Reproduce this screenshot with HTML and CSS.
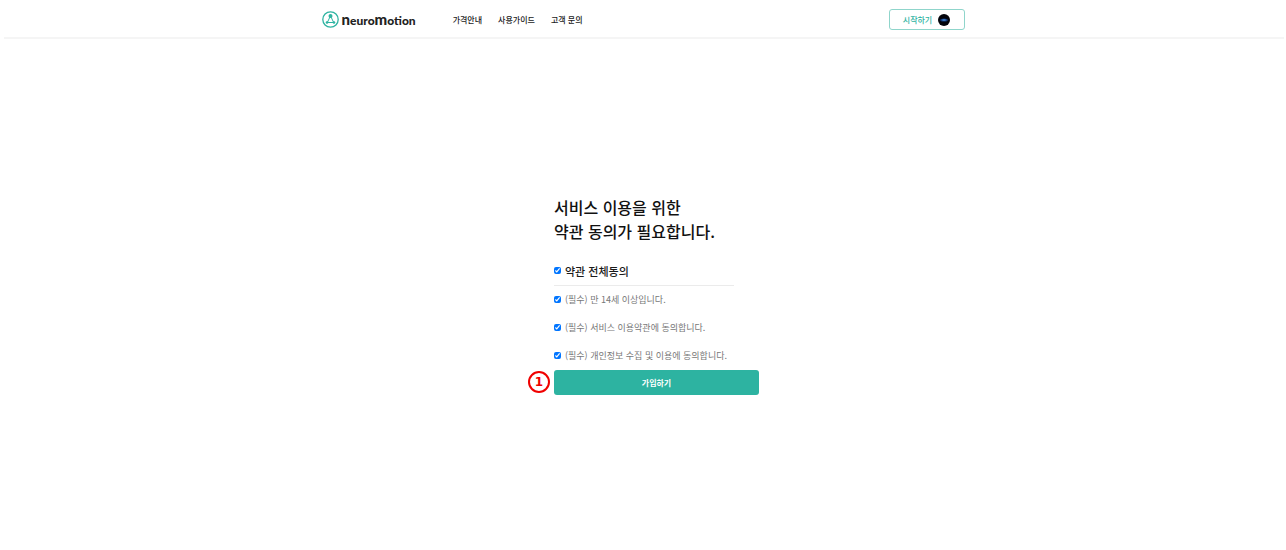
FILE: index.html
```html
<!DOCTYPE html>
<html lang="ko">
<head>
<meta charset="utf-8">
<meta name="viewport" content="width=device-width, initial-scale=1">
<title>NeuroMotion</title>
<link rel="stylesheet" href="styles.css">
</head>
<body>
<header class="header">
  <div class="header-inner">
    <a class="logo" href="#" aria-label="NeuroMotion">
      <svg class="logo-mark" viewBox="0 0 17 17" aria-hidden="true">
        <circle cx="8.5" cy="8.5" r="7.7" fill="none" stroke="#2db3a1" stroke-width="1.3"/>
        <path d="M8.5 4.8 5.2 11.8M8.5 4.8 11.8 11.8M5.2 11.5H11.8" fill="none" stroke="#2db3a1" stroke-width="1"/>
        <circle cx="8.5" cy="5" r="2" fill="#2db3a1"/>
        <circle cx="5" cy="11.5" r="1.3" fill="#2db3a1"/>
        <circle cx="12" cy="11.5" r="1.3" fill="#2db3a1"/>
      </svg>
      <span class="logo-text"><span class="logo-cap">N</span>euro<span class="logo-cap">M</span>otion</span>
    </a>
    <nav class="nav">
      <a href="#">가격안내</a>
      <a href="#">사용가이드</a>
      <a href="#">고객 문의</a>
    </nav>
    <button class="start" type="button">시작하기
      <svg class="avatar" viewBox="0 0 12 12" aria-hidden="true">
        <circle cx="6" cy="6" r="6" fill="#03050c"/>
        <ellipse cx="6" cy="6" rx="3.8" ry="1.6" fill="#123a7c"/>
        <ellipse cx="6" cy="6" rx="2" ry=".8" fill="#4a8fd8"/>
      </svg>
    </button>
  </div>
</header>
<main class="main">
  <form class="terms">
    <h1 class="title">서비스 이용을 위한<br>약관 동의가 필요합니다.</h1>
    <label class="check check-all"><input type="checkbox" checked>약관 전체동의</label>
    <div class="items">
      <label class="check"><input type="checkbox" checked>(필수) 만 14세 이상입니다.</label>
      <label class="check"><input type="checkbox" checked>(필수) 서비스 이용약관에 동의합니다.</label>
      <label class="check"><input type="checkbox" checked>(필수) 개인정보 수집 및 이용에 동의합니다.</label>
    </div>
    <div class="submit-row">
      <span class="step">1</span>
      <button class="submit" type="button">가입하기</button>
    </div>
  </form>
</main>
</body>
</html>
```
FILE: styles.css
```css
* { box-sizing: border-box; }

body {
  margin: 0;
  min-height: 100vh;
  display: flex;
  flex-direction: column;
  background: #fff;
  color: #1a1a1a;
  font-family: "Noto Sans CJK KR", sans-serif;
  font-size: 8px;
}

a { color: inherit; text-decoration: none; }
button { font-family: inherit; cursor: pointer; }

.header {
  margin: 0 2px 0 4px;
  padding-right: 2px;
  border-bottom: 2px solid #f5f5f5;
}

.header-inner {
  display: flex;
  align-items: center;
  max-width: 643px;
  height: 37px;
  margin: 0 auto;
  padding-top: 2px;
}

.logo { display: flex; align-items: center; gap: 3px; }
.logo-mark { width: 17px; height: 17px; }
.logo-text {
  font: 900 12px/16px Lato, sans-serif;
  color: #222;
}
.logo-cap { font-size: 15px; text-transform: lowercase; }

.nav {
  display: flex;
  gap: 16px;
  margin-left: 37px;
  font-weight: 500;
  line-height: 12px;
}

.start {
  display: flex;
  align-items: center;
  justify-content: center;
  gap: 6px;
  width: 76px;
  height: 21px;
  margin-left: auto;
  padding: 0;
  border: 1px solid #8fd5cb;
  border-radius: 3px;
  background: #fff;
  color: #2db3a1;
  font-size: 8px;
  font-weight: 500;
}
.avatar { width: 12px; height: 12px; }

.main {
  flex: 1;
  display: flex;
  align-items: center;
  justify-content: center;
  padding-left: 2px;
}

.terms { width: 180px; }

.title {
  margin: 0 0 20px;
  font-size: 16px;
  font-weight: 500;
  line-height: 24px;
  white-space: nowrap;
  color: #111;
}

.check {
  display: flex;
  align-items: center;
  gap: 4px;
  font-size: 9px;
  line-height: 12px;
  white-space: nowrap;
  color: #777;
}
.check input {
  flex: none;
  width: 7px;
  height: 7px;
  margin: 0;
  accent-color: #0075ff;
}

.check-all {
  padding-bottom: 6px;
  border-bottom: 1px solid #ebebeb;
  color: #1a1a1a;
  font-size: 11px;
  font-weight: 500;
  line-height: 16px;
}

.items {
  display: grid;
  gap: 16px;
  padding: 8px 0;
}

.submit-row {
  position: relative;
  margin-right: -25px;
}
.submit {
  display: block;
  width: 100%;
  height: 25px;
  padding: 0;
  border: 0;
  border-radius: 3px;
  background: #2db3a1;
  color: #fff;
  font-size: 8px;
  font-weight: 700;
}
.step {
  position: absolute;
  top: 1px;
  left: -26px;
  width: 22px;
  height: 22px;
  border: 2px solid #f00000;
  border-radius: 50%;
  color: #f00000;
  font: 700 12px/18px "DejaVu Sans", sans-serif;
  text-align: center;
}
```
